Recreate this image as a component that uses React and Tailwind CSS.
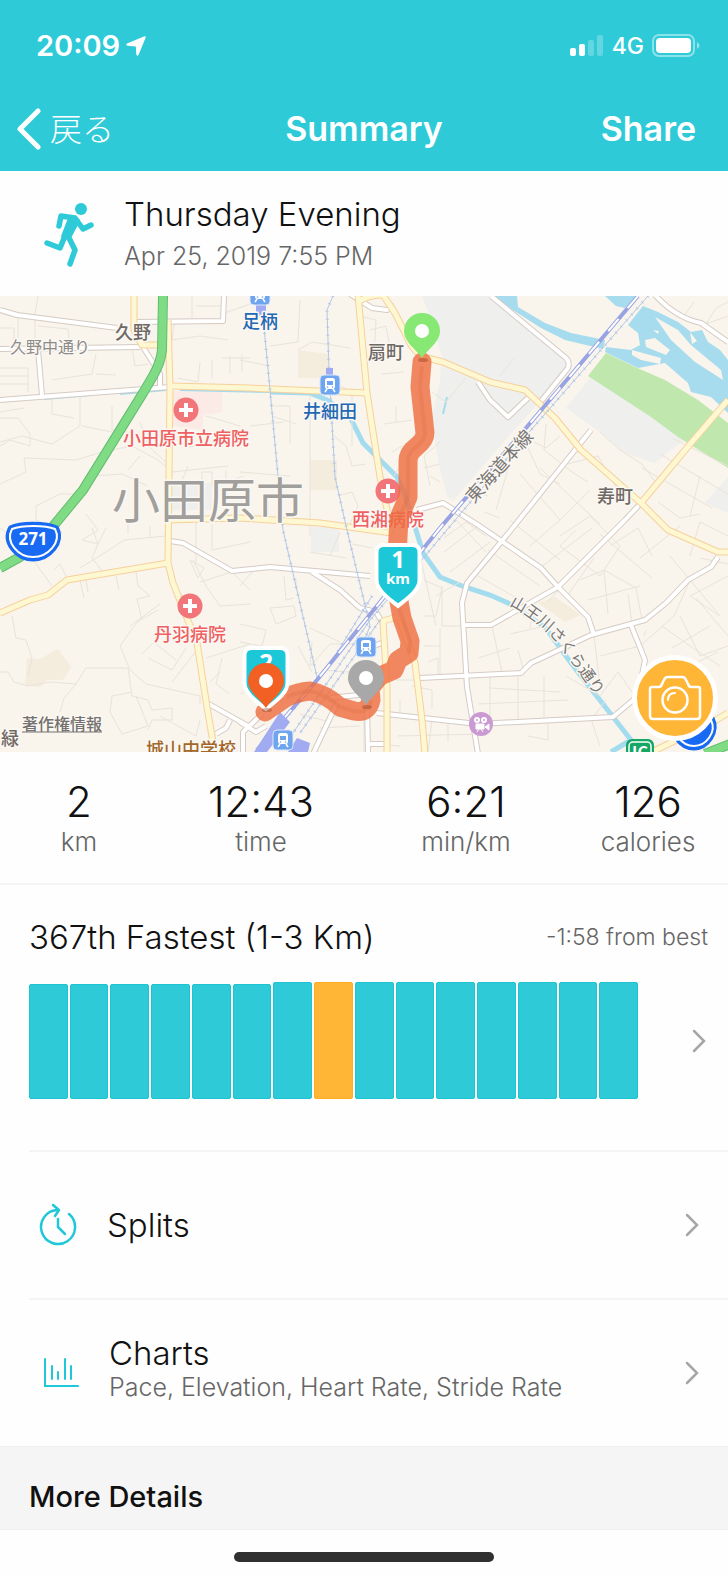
const stats = [
  { value: "2", label: "km" },
  { value: "12:43", label: "time" },
  { value: "6:21", label: "min/km" },
  { value: "126", label: "calories" },
];

const bars = [115, 115, 115, 115, 115, 115, 117, 117, 117, 117, 117, 117, 117, 117, 117];
const currentBar = 7;

const minorRoads = [
  "M38 0L35 18V52M0 32H14V52M18 22V42M38 30L68 33L70 52M0 72H28V96M0 80H28M0 88H28M96 58L92 78L52 84M96 78L116 79",
  "M132 52L135 70L148 68M175 24L172 44L200 40L228 44M192 0V24M196 10H224M250 8L222 18M212 64V82M222 62H250M230 60V78M242 58V76",
  "M200 66L198 86L178 82M0 116L24 112M0 122H18L30 138V150L10 144L0 150M80 98V130L52 148L22 140L0 146M52 100V118L74 122",
  "M112 110V134L140 138M82 130L112 136M0 188L26 176L24 162L76 164L102 156M102 156L132 150L158 164L172 176L228 170",
  "M92 180L122 178L148 190M140 160L128 174M36 210L60 198H80M36 210V224L62 236L54 250M86 218L98 234L82 244L98 248L106 232",
  "M140 126L148 150L168 168M226 174V186L244 180M202 190V176H212V190M188 170L180 190M184 152L216 146L250 148M240 130L206 120",
  "M0 232L16 244M32 262L52 290M92 232L98 248L92 262L102 275M80 272L106 256L124 244L166 240M128 224V238M150 230V242M196 226V268M212 228V254L250 246",
  "M54 274L60 268L66 280M80 284L84 302M86 284L88 296M116 280L119 294M136 276L138 290L150 300L137 303L142 324M137 326L120 350L130 374L146 388L200 400V408",
  "M160 308L130 330M137 326L158 314M193 264L206 290L220 310L250 308M200 286L232 276L250 294M190 264L204 272L198 282Z",
  "M12 320L16 342L26 344L32 362L28 380M0 376H8L14 386L28 390L50 386L76 388M76 388L86 372H128L132 400M76 388L64 402L60 416",
  "M132 396L112 400L110 416L122 438L148 430L136 400M132 400L148 404L152 414L172 412V424L152 424L148 434M172 386L200 350",
  "M142 358L164 336M148 362L172 374L186 352M156 348L176 364M200 424L196 440L160 420M222 362L216 388L230 398M206 362L250 348M210 386L220 376",
  "M270 16L242 22M300 4L298 46L270 50M240 64L270 70M270 110H290V148M250 130L284 126M272 120L296 128M310 100V240M240 176L290 180M268 200V224M298 54L312 46L350 52",
  "M340 90L352 96V150M332 138L346 150L352 170L366 168M338 200L352 196L358 210L350 228M360 20L376 24L374 60L364 62M370 34L386 30L390 52M382 78L404 76M384 128L412 124M396 110V126",
  "M404 162L394 180M440 146L424 160L430 190M424 172L440 168M432 96L446 106L466 82M392 156L402 150L412 160M430 180L440 186",
  "M500 80L514 62M560 140L546 152L534 146M546 128L544 154L572 176L588 186M528 152L540 178L560 188M560 170L598 160L618 194M510 166L496 214M600 136L620 154L642 168L658 190",
  "M672 142L728 170M660 158L728 198M642 172L712 212M656 190L644 208M658 206L680 222L700 218M700 180L690 220M520 178L560 224M540 172L600 228M590 194L560 224",
  "M590 160L640 206M706 28L716 12L728 6M684 20L694 6M700 30L728 20M478 196L488 200M484 216L500 222M728 240L700 226L690 260M560 240L590 220L620 250L600 280L560 250",
  "M530 250L560 224M488 254L540 290M510 224L560 264M478 280L520 304M540 272L592 232M600 238L652 282M610 250L638 232L652 260M580 284L604 274L608 318M604 274L636 292L642 324M628 298L632 328M594 262L574 290L566 302",
  "M588 304L640 290M548 306L560 292M534 308L530 332M510 338L546 330M690 284L674 320L640 350L600 360M670 260L690 284L720 320L690 300L728 280M700 262L728 268M696 302L728 340M680 320L700 360L728 350",
  "M492 330L502 376M510 352L478 362M518 354L524 376M594 340L600 390M490 380V428M518 380V428M544 380V426M490 392L560 396M478 408L568 404M566 380L600 400L618 376L632 396M590 420L600 450M548 426V444L528 440",
  "M606 404L594 420M646 334L644 340M662 330L690 350L720 370M672 352L710 330M690 370L718 356M640 262L680 230M560 250L576 234",
  "M240 290L252 276M240 328L266 334L262 350L240 346M270 312L294 310L296 320L276 328ZM284 280L286 304L294 302M296 282V294M312 346L310 370L330 348L364 348M322 374L348 376L376 370",
  "M298 350L312 376M310 332L340 346M240 398L266 386M310 256L346 262M352 248L372 252M340 236L330 260M424 284L442 292L436 320L424 320M436 300L460 286M442 290V330H462M440 332V380",
  "M420 260L436 330M424 350H440M412 390L432 394V412M428 366L438 362V380M396 384H414M400 404V418M398 440L480 438M374 448L400 450M334 420L364 424V456M320 432L360 430M432 424L428 456M448 424V446",
  "M444 242L466 226L486 240M444 256L478 230M450 276L490 246M456 224L486 256M300 418L330 426M284 404L270 410",
];

const whiteRoads = [
  "M0 14L17 19L117 32",
  "M0 53L140 51",
  "M0 104L170 91",
  "M38 54L42 99",
  "M143 51L160 78V90",
  "M134 26L223 25L224 0",
  "M350 -2L372 12L387 14L395 10",
  "M491 0L566 62Q570 66 568 72L538 109",
  "M478 86L490 104L508 121L528 102",
  "M655 -1Q676 22 701 27L728 46",
  "M591 134L511 234L467 287L462 307L467 391L478 458",
  "M641 207L625 224L558 291L491 329H463",
  "M417 214L443 207L478 229L541 272L558 291L588 321L594 339",
  "M718 261L711 271L688 284L666 307L645 324L591 339L531 367L521 377L420 382",
  "M631 329L645 364L641 384V404",
  "M638 400L613 421L478 428L377 417",
  "M170 245L183 247L232 275L270 271L370 280",
  "M312 276L340 294L360 312L376 316L382 326",
  "M367 411L368 456",
  "M337 407L313 458",
  "M330 402L368 398",
  "M368 448H386",
  "M374 350L384 346",
  "M207 407L250 431",
  "M230 424L226 432L216 438",
  "M262 418L243 436V456",
  "M240 426L256 436L266 430",
];

const yellowRoads = [
  "M134 0V34L142 49H160",
  "M168 24L170 91L168 267L173 287L197 347L207 411L215 458",
  "M170 90L250 92L367 97",
  "M358 -1L367 97L380 181L390 227V237",
  "M358 6Q370 -2 383 -1L395 17L407 41Q414 58 427 62L443 66L490 86L525 94L555 122L581 154L641 207L668 234L718 256H728",
  "M728 104L691 147L641 207",
  "M167 224L240 222L320 227L392 237",
  "M168 267L67 284L48 299L30 304L0 317",
  "M397 321L383 325L387 391V458",
  "M400 324L415 367L422 424L425 458",
  "M652 456L711 427L728 417",
];

const placeLabels = [
  { text: "久野", x: 115, y: 43, size: 18, color: "#6f6965" },
  { text: "扇町", x: 368, y: 63, size: 18, color: "#6f6965" },
  { text: "寿町", x: 597, y: 207, size: 18, color: "#6f6965" },
  { text: "緑", x: 1, y: 449, size: 18, color: "#6f6965" },
  { text: "足柄", x: 242, y: 32, size: 18, color: "#2368b4" },
  { text: "井細田", x: 303, y: 122, size: 18, color: "#2368b4" },
  { text: "小田原市立病院", x: 123, y: 149, size: 18, color: "#ee6062" },
  { text: "西湘病院", x: 352, y: 230, size: 18, color: "#ee6062" },
  { text: "丹羽病院", x: 154, y: 345, size: 18, color: "#ee6062" },
  { text: "城山中学校", x: 146, y: 460, size: 18, color: "#a3672a" },
];

const jp = "font-['Noto_Sans_CJK_JP',sans-serif]";

function Hospital({ x, y }) {
  return (
    <g transform={`translate(${x} ${y})`}>
      <circle r="12.5" fill="#f17579" />
      <path d="M-7 0H7M0 -7V7" stroke="#fff" strokeWidth="4" />
    </g>
  );
}

function Station({ x, y }) {
  return (
    <g transform={`translate(${x} ${y})`}>
      <rect x="-10" y="-10" width="20" height="20" rx="4" fill="#6ea5ee" stroke="#dbe7fb" />
      <rect x="-5" y="-7" width="10" height="11" rx="2.5" fill="#fff" />
      <rect x="-3" y="-4" width="6" height="4" fill="#6ea5ee" />
      <path d="M-3 4L-5 7M3 4L5 7" stroke="#fff" strokeWidth="1.5" />
      <circle cx="-2.5" cy="2" r="0.8" fill="#6ea5ee" />
      <circle cx="2.5" cy="2" r="0.8" fill="#6ea5ee" />
    </g>
  );
}

function Pin({ x, y, color }) {
  return (
    <g transform={`translate(${x} ${y})`}>
      <ellipse cx="1" cy="2" rx="5" ry="2" fill="#7a3018" opacity="0.35" />
      <path d="M0 0C-5 -8 -18 -16 -18 -27A18 18 0 0 1 18 -27C18 -16 5 -8 0 0Z" fill={color} />
      <circle cy="-27" r="7" fill="#fff" />
    </g>
  );
}

function KmShield({ x, y, children }) {
  return (
    <g transform={`translate(${x} ${y})`}>
      <path
        d="M-14 1H14Q21.5 1 21.5 8V36C21.5 46 10 54 0 62C-10 54 -21.5 46 -21.5 36V8Q-21.5 1 -14 1Z"
        fill="#1cc8d8"
        stroke="#fff"
        strokeWidth="4"
      />
      {children}
    </g>
  );
}

function RouteMap() {
  return (
    <svg
      viewBox="0 0 728 456"
      preserveAspectRatio="xMidYMid slice"
      className={`block h-[456px] w-full ${jp}`}
      role="img"
      aria-label="Route map"
    >
      <rect width="728" height="456" fill="#f9f4ec" />

      {/* land use */}
      <g fill="#efefed">
        <path d="M422 0H493L568 64V72L534 112L500 150L453 205L447 200L438 165L432 121L440 85L442 61L436 40L428 15Z" />
        <path d="M591 81L625 101L655 122L683 144L655 167L625 157L601 137L566 112Z" />
        <path d="M728 181L705 207L728 217ZM311 231H339V256H311ZM170 187H212V214H170Z" />
      </g>
      <g fill="#f4ecdd">
        <path d="M298 54L328 58V82H298ZM310 164H337V194H310ZM538 307L555 301L581 319L565 326Z" />
        <path d="M27 362L40 363L58 353L71 371L63 384L47 384L40 391L25 389Z" />
      </g>
      <path d="M173 95H222V116L203 119V134L172 130Z" fill="#fbeae6" />
      <path d="M606 57L635 71L665 84L698 104L728 127V172L678 141L651 121L588 80Z" fill="#c0e8ae" />

      {/* rivers */}
      <g fill="#a6dcee">
        <path d="M491 0H517L518 11L545 27L571 37L605 44L603 53L565 44L541 32L508 11Z" />
        <path d="M605 0H636L625 12L616 10Z" />
        <path d="M643 10L658 16L678 26L691 36L702 34L708 46L720 54L728 64V117L711 101L691 96L688 87L665 67L638 72L605 56L606 51L631 54L640 49L638 37L628 29Z" />
      </g>
      <g fill="#f9f4ec">
        <path d="M655 21L678 34L691 49L721 74L723 84L695 66L671 44ZM645 44L655 42L670 54L666 59L646 51Z" />
        <path d="M632 54L661 62L660 68L641 64L632 59ZM690 36L697 45L692 48ZM653 34L659 35L658 38Z" />
      </g>
      <g fill="none" stroke="#a3dcee">
        <path d="M44 103L90 99M120 98L166 94M180 94L270 96" strokeWidth="2" />
        <path d="M270 96L310 97L327 104L350 121L363 147L397 181L404 196L415 231L423 257L440 281L462 290L490 299L508 307L545 331L571 367L631 444L611 456" strokeWidth="5" />
        <path d="M447 101L443 118" strokeWidth="2" />
      </g>

      <g fill="none" stroke="#e8e4da" strokeWidth="1">
        {minorRoads.map((d) => (
          <path key={d} d={d} />
        ))}
      </g>

      <g fill="none" strokeLinejoin="round">
        <g stroke="#d5cbc4" strokeWidth="6">
          {whiteRoads.map((d) => (
            <path key={d} d={d} />
          ))}
        </g>
        <g stroke="#fff" strokeWidth="4">
          {whiteRoads.map((d) => (
            <path key={d} d={d} />
          ))}
        </g>
        <g stroke="#f7d09c" strokeWidth="7">
          {yellowRoads.map((d) => (
            <path key={d} d={d} />
          ))}
        </g>
        <g stroke="#fdf8d2" strokeWidth="5">
          {yellowRoads.map((d) => (
            <path key={d} d={d} />
          ))}
        </g>
        <path d="M163 0L162 54Q161 66 153 80L143 97L83 194L50 234L20 261L0 272M705 458L730 448" stroke="#62bd70" strokeWidth="10" />
        <path d="M163 0L162 54Q161 66 153 80L143 97L83 194L50 234L20 261L0 272M705 458L730 448" stroke="#80dc84" strokeWidth="8" />
      </g>

      {/* railways */}
      <g fill="none">
        <g stroke="#b3c7e6" strokeWidth="1">
          <path d="M263 21L270 94L283 234L317 381M333 0L327 14L329 74L335 181L347 234L370 330L362 350" />
          <path d="M648 0L531 134L425 260L370 324L293 437M380 324L300 437M372 300L330 368L280 430" />
        </g>
        <g stroke="#b3c7e6" strokeWidth="3" strokeDasharray="1 7">
          <path d="M263 21L270 94L283 234L317 381M333 0L327 14L329 74L335 181L347 234L370 330L362 350" />
          <path d="M648 0L531 134L425 260L370 324L293 437M380 324L300 437M372 300L330 368L280 430" />
        </g>
        <path d="M638 0L526 132L440 232L317 384L257 454" stroke="#98a3e4" strokeWidth="4" />
        <path d="M638 0L526 132L440 232L317 384L257 454" stroke="#fff" strokeWidth="2" strokeDasharray="16 14" />
      </g>
      <path
        d="M256 8H266V20H256ZM326 72H333V80H326ZM280 416L290 426L267 456H254ZM297 442L310 447L308 456H288Z"
        fill="#a0abf2"
      />

      {/* badges and place names */}
      <Hospital x={186} y={114} />
      <Hospital x={388} y={195} />
      <Hospital x={190} y={310} />
      <Station x={260} y={-1} />
      <Station x={330} y={89} />
      <Station x={366} y={351} />
      <Station x={283} y={444} />
      <g transform="translate(481 428)">
        <circle r="12" fill="#cb9ad2" />
        <circle cx="-4" cy="-4" r="3" fill="#fff" />
        <circle cx="3" cy="-4" r="3" fill="#fff" />
        <path d="M-5 0H3V5H-5ZM4 3L8 0V6ZM-2 5L-4 8M0 5L2 8" fill="#fff" stroke="#fff" />
        <circle cx="-4" cy="-4" r="1" fill="#cb9ad2" />
        <circle cx="3" cy="-4" r="1" fill="#cb9ad2" />
      </g>

      <g stroke="#fbf8f3" strokeWidth="3" strokeLinejoin="round" paintOrder="stroke">
        {placeLabels.map((l) => (
          <text key={l.text} x={l.x} y={l.y} fontSize={l.size} fill={l.color} fontWeight="500">
            {l.text}
          </text>
        ))}
        <text x="10" y="57" fontSize="16" fill="#8d8b89">久野中通り</text>
        <text x="112" y="222" fontSize="48" fill="#a19f9b">小田原市</text>
        <text transform="translate(474 208) rotate(-48)" fontSize="18" fill="#7a7775">東海道本線</text>
        <path id="street" d="M509 309Q544 328 562 353T608 416" fill="none" stroke="none" />
        <text fontSize="16" fill="#7a7775">
          <textPath href="#street">山王川さくら通り</textPath>
        </text>
        <a href="#copyright">
          <text x="22" y="434" fontSize="16" fill="#74716e" fontWeight="500">著作権情報</text>
          <path d="M22 436H102" stroke="#74716e" strokeWidth="1" />
        </a>
      </g>

      {/* road signs */}
      <path d="M10 231C20 226 46 226 57 231C66 246 50 264 33 264C16 264 1 246 10 231Z" fill="#186af3" stroke="#186af3" strokeWidth="3" />
      <path d="M12 233C22 229 45 229 55 233C62 246 48 261 33 261C18 261 5 246 12 233Z" fill="#186af3" stroke="#fff" strokeWidth="2" />
      <text x="33" y="249" textAnchor="middle" fontSize="17" fontWeight="700" fill="#fff" className="font-['Noto_Sans',sans-serif]">271</text>
      <path d="M674 421C684 417 704 417 713 422C720 436 708 453 694 453C680 453 666 436 674 421Z" fill="#186af3" stroke="#186af3" strokeWidth="3" />
      <path d="M676 423C686 419 703 419 711 424C717 436 706 450 694 450C682 450 670 436 676 423Z" fill="#186af3" stroke="#fff" strokeWidth="2" />
      <rect x="627" y="444" width="26" height="26" rx="5" fill="#16a765" stroke="#16a765" strokeWidth="2" />
      <rect x="629" y="446" width="22" height="22" rx="4" fill="#16a765" stroke="#fff" strokeWidth="1.5" />
      <text x="640" y="462" textAnchor="middle" fontSize="16" fontWeight="700" fill="#fff">IC</text>

      <path
        d="M422 66L420 91L425 137Q425 144 416 151Q408 157 408 165V201L399 222L397 260L398 300L402 322L410 345L409 357L398 364L394 374L380 380L370 392L371 404Q368 418 354 415L340 411Q326 398 310 395Q298 396 287 401L265 416"
        fill="none"
        stroke="#ef6b3e"
        strokeOpacity="0.8"
        strokeWidth="19"
        strokeLinejoin="round"
        strokeLinecap="round"
      />
      <path
        d="M422 70L420 91L425 137Q425 144 416 151Q408 157 408 165V201L399 222M399 312L410 345L409 357M371 404Q368 418 354 415L340 411Q326 398 310 395Q298 396 287 401"
        fill="none"
        stroke="#dd7048"
        strokeOpacity="0.35"
        strokeWidth="4"
      />

      <g fill="#fff" fontWeight="700" textAnchor="middle" className="font-['Noto_Sans',sans-serif]">
        <KmShield x={398} y={248}>
          <text y="24" fontSize="24">1</text>
          <text y="40" fontSize="15">km</text>
        </KmShield>
        <KmShield x={266} y={351}>
          <text y="24" fontSize="24">2</text>
        </KmShield>
      </g>
      <Pin x={422} y={62} color="#87e873" />
      <Pin x={366} y={409} color="#a8a8a8" />
      <Pin x={266} y={412} color="#f26024" />
    </svg>
  );
}

function Chevron() {
  return (
    <svg viewBox="0 0 14 24" className="h-6 w-3.5 shrink-0" fill="none" stroke="#a6a6a6" strokeWidth="2.5" aria-hidden="true">
      <path d="M2 2L12 12L2 22" strokeLinecap="round" />
    </svg>
  );
}

function Header() {
  return (
    <header className="bg-[#2ecad8] text-white">
      <div className="flex h-[92px] items-center justify-between pl-9 pr-7">
        <div className="flex items-center gap-1.5">
          <span className="text-[29px] font-semibold">20:09</span>
          <svg viewBox="0 0 20 20" className="size-5" fill="#fff" aria-hidden="true">
            <path d="M18.5 0.3Q20 0 19.7 1.5L12.5 19Q11 20.5 10.3 18.5L9.8 10.5L1.5 9.8Q-0.5 9 1 7.6Z" />
          </svg>
        </div>
        <div className="flex items-center gap-2">
          <svg viewBox="0 0 34 22" className="h-[22px] w-[34px]" fill="#fff" aria-hidden="true">
            <rect y="13" width="6" height="8" rx="2" />
            <rect x="9" y="9" width="6" height="12" rx="2" />
            <rect x="18" y="5" width="6" height="16" rx="2" opacity="0.25" />
            <rect x="27" width="6" height="21" rx="2" opacity="0.25" />
          </svg>
          <span className="text-[23px] font-medium">4G</span>
          <svg viewBox="0 0 48 24" className="h-6 w-12" fill="none" aria-hidden="true">
            <rect x="1" y="1" width="41" height="21" rx="6" stroke="#fff" strokeWidth="2" opacity="0.45" />
            <rect x="4" y="4" width="35" height="15" rx="4" fill="#fff" />
            <path d="M45 8Q50 11.5 45 15Z" fill="#fff" opacity="0.5" />
          </svg>
        </div>
      </div>
      <nav className="grid h-[79px] grid-cols-[1fr_auto_1fr] items-center pb-1.5">
        <button className="flex items-center gap-2 justify-self-start pl-4">
          <svg viewBox="0 0 26 42" className="h-[42px] w-[26px]" fill="none" stroke="#fff" strokeWidth="5" strokeLinecap="round" strokeLinejoin="round" aria-hidden="true">
            <path d="M22 3L4 21L22 39" />
          </svg>
          <span className={`pb-1 text-[32px] leading-9 font-light ${jp}`}>戻る</span>
        </button>
        <h1 className="text-[34px] leading-10 font-semibold">Summary</h1>
        <button className="justify-self-end pr-8 text-[34px] leading-10 font-semibold">Share</button>
      </nav>
    </header>
  );
}

export default function App() {
  return (
    <div className="min-h-screen bg-[#fefefe] font-['Inter','Noto_Sans_CJK_JP',sans-serif] text-[#111]">
      <Header />

      <section className="flex h-[125px] items-center gap-7 pl-[42px]">
        <svg viewBox="42 199 54 70" className="h-[70px] w-[54px]" fill="none" stroke="#2ecad8" strokeWidth="5.5" strokeLinecap="round" strokeLinejoin="round" aria-hidden="true">
          <circle cx="81" cy="209" r="6" fill="#2ecad8" stroke="none" />
          <path d="M59 226L61 216L75 218L83 229L91 225" />
          <path d="M71 218L64 236L69 236L77 221Z" fill="#2ecad8" />
          <path d="M65 236L60 248L47 243M68 236L75 250L70 264" />
        </svg>
        <div>
          <h2 className="text-[33px] leading-10 font-light">Thursday Evening</h2>
          <p className="mt-1 text-[25px] leading-9 font-light text-[#666]">Apr 25, 2019 7:55 PM</p>
        </div>
      </section>

      <div className="relative overflow-hidden">
        <RouteMap />
        <button
          aria-label="Add photo"
          className="absolute right-2.5 bottom-[11px] flex size-[86px] items-center justify-center rounded-full border-[5px] border-white bg-[#ffb535]"
        >
          <svg viewBox="0 0 54 46" className="h-[46px] w-[54px]" fill="none" stroke="#fff" strokeWidth="2.5" strokeLinejoin="round" aria-hidden="true">
            <path d="M4 12H11Q13 12 14 9L16 5Q17 2 20 2H34Q37 2 38 5L40 9Q41 12 43 12H50Q52 12 52 14V41Q52 44 49 44H5Q2 44 2 41V14Q2 12 4 12Z" />
            <circle cx="27" cy="25" r="12.5" />
            <path d="M20 25Q20 18 27 18" strokeLinecap="round" strokeWidth="2" />
          </svg>
        </button>
      </div>

      <dl className="grid h-[133px] grid-cols-[158fr_206fr_204fr_160fr] border-b-2 border-[#f4f4f4] pt-[26px] text-center">
        {stats.map((s) => (
          <div key={s.label} className="flex flex-col-reverse justify-end">
            <dt className="text-[26px] leading-8 font-light text-[#666]">{s.label}</dt>
            <dd className="text-[42px] leading-12 font-light">{s.value}</dd>
          </div>
        ))}
      </dl>

      <section className="h-[265px] pt-8">
        <div className="flex items-center justify-between pr-5 pl-[29px]">
          <h2 className="text-[33px] leading-10 font-light">367th Fastest (1-3 Km)</h2>
          <p className="text-[23px] font-light text-[#666]">-1:58 from best</p>
        </div>
        <button aria-label="Compare with other runs" className="mt-[25px] flex w-full items-center justify-between pr-[22px] pl-[29px]">
          <span className="mr-[54px] flex flex-1 items-end gap-0.5">
            {bars.map((h, i) => (
              <span
                key={i}
                className={`flex-1 rounded-xs border ${
                  i === currentBar ? "border-[#ffae1f] bg-[#ffb535]" : "border-[#1cc3d3] bg-[#2ecad8]"
                }`}
                style={{ height: h }}
              />
            ))}
          </span>
          <Chevron />
        </button>
      </section>

      <ul>
        <li className="ml-[29px] border-t-2 border-[#f4f4f4]">
          <button className="flex h-[146px] w-full items-center pr-[29px] pl-2.5 text-left">
            <svg viewBox="0 0 40 44" className="h-11 w-10" fill="none" stroke="#1fc8d8" strokeWidth="2.5" strokeLinecap="round" strokeLinejoin="round" aria-hidden="true">
              <path d="M30 11A17 17 0 1 1 19 7" />
              <path d="M14 2L20 7L16 13M19 16V24L26 31" />
            </svg>
            <span className="ml-7 flex-1 text-[33px] leading-9 font-light">Splits</span>
            <Chevron />
          </button>
        </li>
        <li className="ml-[29px] border-t-2 border-[#f4f4f4]">
          <button className="flex h-[146px] w-full items-center pr-[29px] pl-3.5 text-left">
            <svg viewBox="0 0 36 30" className="h-[30px] w-9" fill="none" stroke="#1fc8d8" strokeWidth="2" strokeLinecap="round" aria-hidden="true">
              <path d="M2 1V28H35M9 8V21M15 14V21M22 1V21M28 8V21" />
            </svg>
            <span className="ml-[30px] flex-1 pb-2">
              <span className="block text-[33px] leading-9 font-light">Charts</span>
              <span className="block text-[25px] leading-8 font-light text-[#666]">Pace, Elevation, Heart Rate, Stride Rate</span>
            </span>
            <Chevron />
          </button>
        </li>
      </ul>

      <section className="flex h-[84px] items-end border-y border-[#efefef] bg-[#f5f5f5] pb-3 pl-[29px]">
        <h2 className="text-[29px] leading-10 font-medium">More Details</h2>
      </section>
      <div className="flex h-12 items-center justify-center pt-1.5">
        <div className="h-2.5 w-[260px] rounded-full bg-[#303030]" />
      </div>
    </div>
  );
}
